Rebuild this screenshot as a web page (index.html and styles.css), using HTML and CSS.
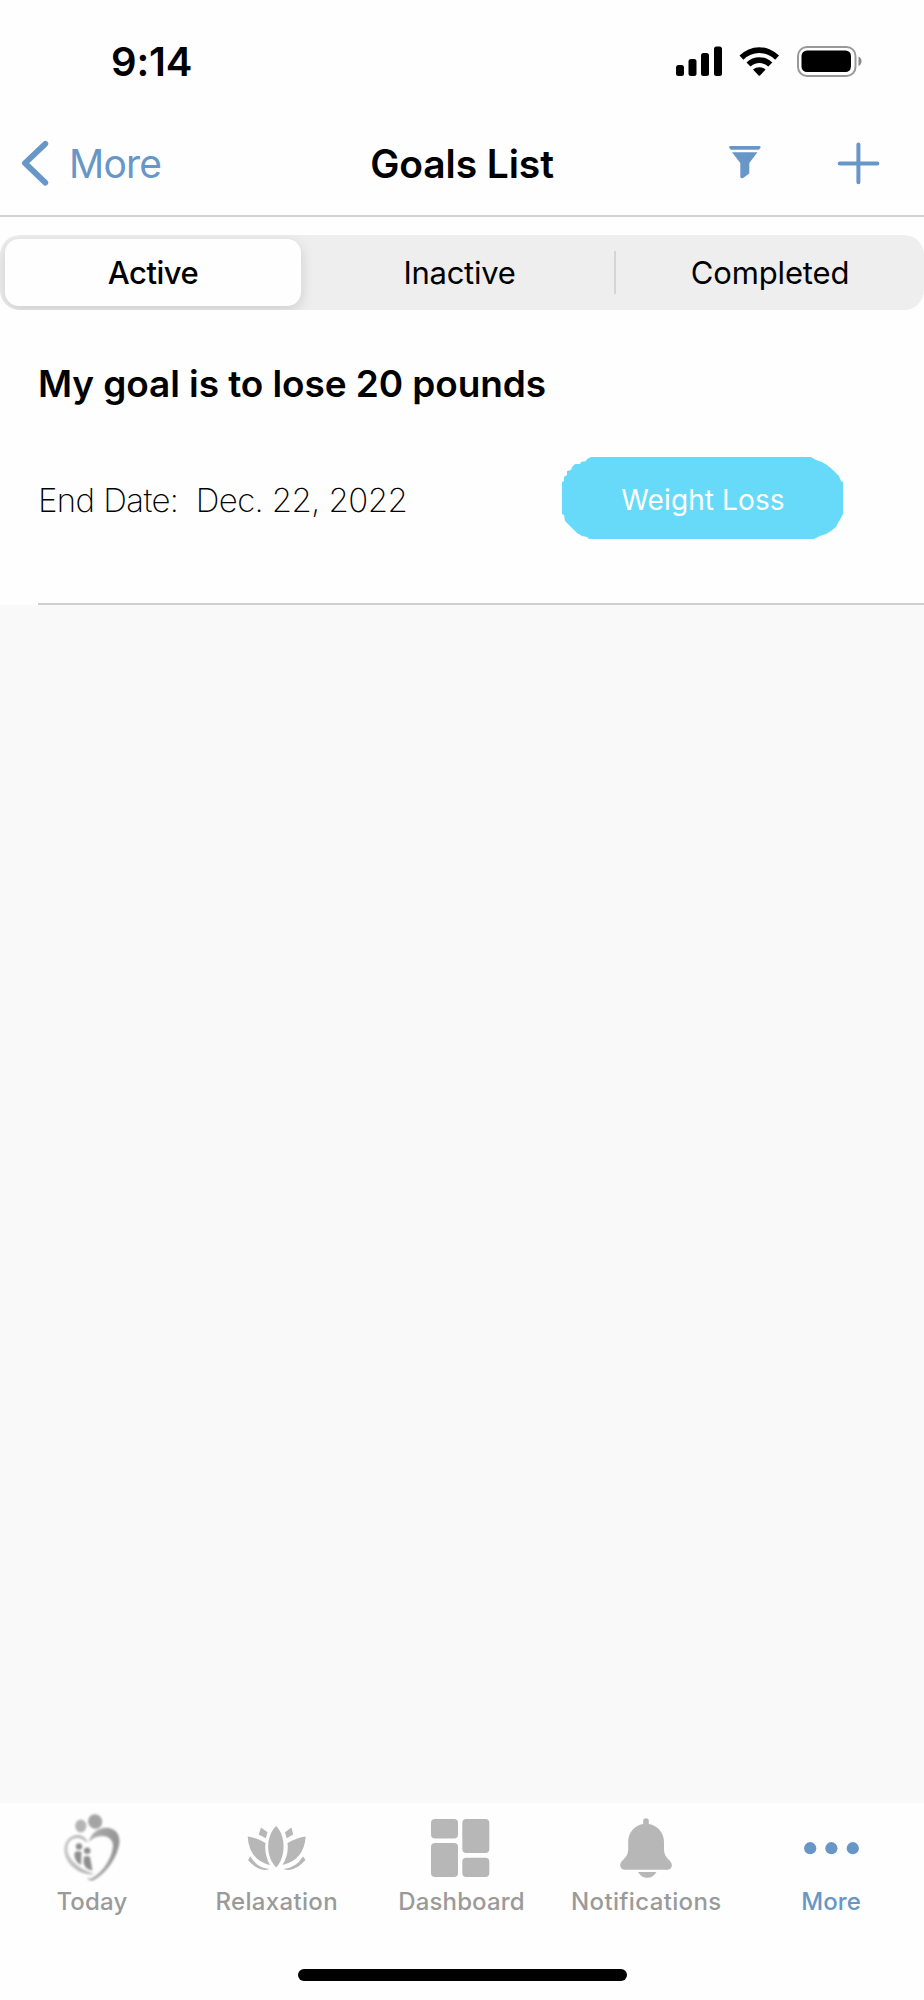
FILE: index.html
```html
<!DOCTYPE html>
<html lang="en">
<head>
<meta charset="utf-8">
<title>Goals List</title>
<link rel="stylesheet" href="styles.css">
</head>
<body>
<div class="screen">
  <header class="status">
    <span class="time">9:14</span>
    <svg class="status-icons" width="190" height="34" viewBox="674 44 190 34">
      <rect x="676" y="65" width="8" height="11" rx="2.5"/>
      <rect x="688.5" y="59" width="8" height="17" rx="2.5"/>
      <rect x="701" y="53" width="8" height="23" rx="2.5"/>
      <rect x="714" y="46.500" width="8" height="29.500" rx="2.5"/>
      <path d="M739.500 55.600A27.500 27.500 0 0 1 779 55.600L775.100 59.700A22.300 22.300 0 0 0 743.400 59.700Z"/>
      <path d="M746.500 62.600A18 18 0 0 1 772.300 62.600L768.300 66.600A13 13 0 0 0 750.500 66.600Z"/>
      <path d="M753 69.600A9.500 9.500 0 0 1 765.600 69.600L760 75.500Q759.300 76.200 758.600 75.500Z"/>
      <rect x="798" y="47" width="57.500" height="29" rx="9" fill="none" stroke="#999" stroke-width="2"/>
      <rect x="801.500" y="50.500" width="49.500" height="21.500" rx="5.500"/>
      <path d="M858.500 56.500Q861.500 58 861.500 61.300T858.500 66Z" fill="#888"/>
    </svg>
  </header>
  <nav class="navbar">
    <a class="back">
      <svg width="30" height="50" viewBox="20 138 30 50"><path d="M45.300 143.800L25 163.200L45.300 182.700" fill="none" stroke="#6796c7" stroke-width="5.800" stroke-linecap="round" stroke-linejoin="round"/></svg>
      <span class="back-label">More</span>
    </a>
    <h1 class="title">Goals List</h1>
    <div class="actions">
      <svg width="34" height="36" viewBox="728 145 34 36" fill="#6796c7"><path d="M730.200 146H759.500Q761 146 760.500 147.500L759 149.800H730.700L729.200 147.500Q728.700 146 730.200 146Z"/><path d="M732 152.300H757.500L749.300 163V173.500L743.500 177.700Q740.300 179.200 740.300 176.500V163Z"/></svg>
      <svg width="44" height="44" viewBox="836 141 44 44"><path d="M839.700 163.400H877.300M858.400 144.600V182.300" stroke="#6796c7" stroke-width="4" stroke-linecap="round"/></svg>
    </div>
  </nav>
  <div class="segments">
    <div class="segment selected">Active</div>
    <div class="segment middle">Inactive</div>
    <div class="segment last">Completed</div>
  </div>
  <article class="goal">
    <h2 class="goal-title">My goal is to lose 20 pounds</h2>
    <div class="goal-row">
      <span class="date">End Date:&nbsp; Dec. 22, 2022</span>
      <span class="pill">Weight Loss</span>
    </div>
  </article>
  <main class="empty"></main>
  <footer class="tabbar">
    <div class="tabs">
      <div class="tab">
        <svg width="64" height="72" viewBox="60 1810 64 72">
          <defs><linearGradient id="g" x1="0" x2="1"><stop offset="0" stop-color="#c8c8c8"/><stop offset="1" stop-color="#939393"/></linearGradient>
          <filter id="soft"><feGaussianBlur stdDeviation=".8"/></filter></defs>
          <g filter="url(#soft)">
            <ellipse cx="80.800" cy="1826" rx="5.600" ry="6.400" fill="#b4b4b4"/>
            <ellipse cx="95.200" cy="1821.500" rx="7" ry="7.400" fill="#a4a4a4" transform="rotate(-25 95.200 1821.500)"/>
            <path fill="url(#g)" d="M87.500 1842C83 1830 64 1834 64.200 1850C65 1866 82 1876 94 1874C84 1871 68 1862 67.500 1849C67.500 1837 80 1835 86 1842ZM88.500 1842C94 1823 120 1823 119.500 1842C118 1858 104 1876 92 1881Q88 1880.500 87 1877.500Q90 1879.500 93 1877.500C105 1870 112 1857 113 1846C113 1834 97 1833 88.500 1842Z"/>
            <g fill="#8f8f8f"><circle cx="79" cy="1846.500" r="3.200"/><circle cx="87.200" cy="1850.700" r="3.300"/>
            <path d="M75 1852Q78 1850.500 81.500 1852L81 1865Q75 1862 74.300 1855ZM84 1857Q87 1855 90 1857L92.500 1870.500Q84 1869 83.500 1862Z"/></g>
          </g>
        </svg>
        <span>Today</span>
      </div>
      <div class="tab">
        <svg width="64" height="72" viewBox="245 1810 64 72" fill="#b7b7b7">
          <path d="M276.200 1826C286 1836 286 1857 276.200 1867.500C265.500 1857 265.500 1836 276.200 1826Z"/>
          <path d="M247.700 1836.500Q256 1837.500 265.500 1843Q264 1854 270 1865Q249 1860 247.700 1836.500ZM305.700 1836.500Q297 1837.500 287.500 1843Q289 1854 282.500 1865Q304 1860 305.700 1836.500Z"/>
          <path d="M261 1827.500L267.500 1832.200L265.800 1838.200L258.700 1834.500ZM291.500 1827.500L285 1832.200L286.700 1838.200L293.200 1834.500Z"/>
          <path d="M250.500 1856.500Q257 1868 269.500 1869Q259 1873 248 1860ZM303 1856.500Q296 1868 283.500 1869Q294 1873 305.500 1860Z"/>
        </svg>
        <span class="wide">Relaxation</span>
      </div>
      <div class="tab">
        <svg width="64" height="72" viewBox="430 1810 64 72" fill="#b7b7b7">
          <rect x="431" y="1819" width="27" height="19.500" rx="4"/><rect x="462.300" y="1819" width="27" height="34" rx="4"/>
          <rect x="431" y="1843" width="27" height="34" rx="4"/><rect x="462.300" y="1857.700" width="27" height="19.300" rx="4"/>
        </svg>
        <span>Dashboard</span>
      </div>
      <div class="tab">
        <svg width="64" height="72" viewBox="615 1810 64 72" fill="#b7b7b7">
          <path d="M643.200 1824V1821A2.800 2.800 0 0 1 648.800 1821V1824C658 1825.500 664 1833 664 1842V1849C664 1855 667 1858 670 1861C674 1865.500 671 1869.700 667.500 1869.700H625C620.500 1869.700 618.500 1865 622 1861C625 1858 628.200 1855 628.200 1849V1842C628.200 1833 634 1825.500 643.200 1824Z"/>
          <path d="M638 1872H656.500C652 1879.800 642.500 1879.800 638 1872Z"/>
        </svg>
        <span class="wide">Notifications</span>
      </div>
      <div class="tab current">
        <svg width="64" height="72" viewBox="800 1810 64 72" fill="#6796c7"><circle cx="810.200" cy="1848.200" r="6.100"/><circle cx="831.400" cy="1848.200" r="6.100"/><circle cx="852.800" cy="1848.200" r="6.100"/></svg>
        <span>More</span>
      </div>
    </div>
    <div class="home"></div>
  </footer>
</div>
</body>
</html>
```
FILE: styles.css
```css
* { box-sizing: border-box; }
body { margin: 0; background: #fefefe; color: #000; font-family: Inter, "Liberation Sans", sans-serif; }
h1, h2 { margin: 0; }
svg { display: block; flex: none; }
span, h1 { white-space: nowrap; }
.screen { width: 924px; height: 2000px; display: flex; flex-direction: column; }
.status { height: 112px; padding: 34px 60px 0 111px; display: flex; justify-content: space-between; align-items: flex-start; }
.time { font-size: 40px; line-height: 56px; font-weight: 600; letter-spacing: -.2px; }
.status-icons { margin-top: 10px; }
.navbar { height: 105px; padding: 0 20px 1px; border-bottom: 2px solid #d3d3d3; display: grid; grid-template-columns: 1fr auto 1fr; align-items: center; }
.back { display: flex; align-items: center; gap: 19px; color: #6796c7; font-size: 39px; }
.back-label { letter-spacing: -.8px; }
.title { font-size: 39px; font-weight: 600; letter-spacing: -.1px; }
.actions { display: flex; justify-content: flex-end; align-items: center; gap: 74px; margin-right: 24px; }
.segments { height: 75px; margin-top: 18px; padding: 4px 5px; border-radius: 20px; background: #eee; display: grid; grid-template-columns: 296px 315px 1fr; overflow: hidden; }
.segment { display: flex; align-items: center; justify-content: center; font-size: 31px; font-weight: 400; }
.selected { height: 67px; background: #fefefe; border-radius: 14px; box-shadow: 0 4px 14px rgba(0,0,0,.14); font-weight: 500; letter-spacing: -.5px; }
.middle { height: 43px; margin-top: 12px; padding-left: 4px; border-right: 2px solid #d5d5d5; letter-spacing: -.3px; }
.last { padding-left: 5px; letter-spacing: -.15px; }
.goal { height: 295px; padding-top: 50px; }
.goal-title { height: 48px; padding-left: 38px; font-size: 37px; line-height: 48px; font-weight: 600; letter-spacing: -.09px; }
.goal-row { height: 197px; margin-left: 38px; padding: 49px 81px 0 0; display: flex; justify-content: space-between; border-bottom: 2px solid #cfcfcf; }
.date { font-size: 33px; line-height: 87px; font-weight: 200; letter-spacing: -.6px; }
.pill {
  width: 281px; height: 82px; padding: 4px 0 0 1px;
  display: flex; align-items: center; justify-content: center;
  background: #67dafa; color: #fff; font-size: 28px; letter-spacing: .1px;
  clip-path: polygon(0 25px, 2px 24px, 2px 20px, 5px 18px, 5px 14px, 9px 13px, 10px 10px, 13px 7px, 18px 7px, 19px 5px, 24px 4px, 25px 2px, 29px 0, 249px 0, 254px 3px, 260px 5px, 265px 8px, 271px 13px, 277px 19px, 279px 24px, 281px 25px, 281px 57px, 279px 61px, 276px 66px, 274px 70px, 269px 74px, 264px 77px, 258px 79px, 252px 82px, 27px 82px, 25px 80px, 20px 79px, 15px 76px, 3px 64px, 2px 58px, 0 57px);
}
.empty { flex: 1; background: #f9f9f9; }
.tabbar { height: 197px; display: flex; flex-direction: column; align-items: center; justify-content: space-between; padding: 7px 0 19px; }
.tabs { width: 100%; display: grid; grid-template-columns: repeat(5, 1fr); }
.tab { display: flex; flex-direction: column; align-items: center; color: #9a9a9a; font-size: 24px; line-height: 40px; font-weight: 450; letter-spacing: .15px; }
.tab span { margin-right: 1px; }
.tab .wide { letter-spacing: .35px; }
.current { color: #6796c7; }
.home { width: 329px; height: 12px; border-radius: 6px; background: #000; }
```
